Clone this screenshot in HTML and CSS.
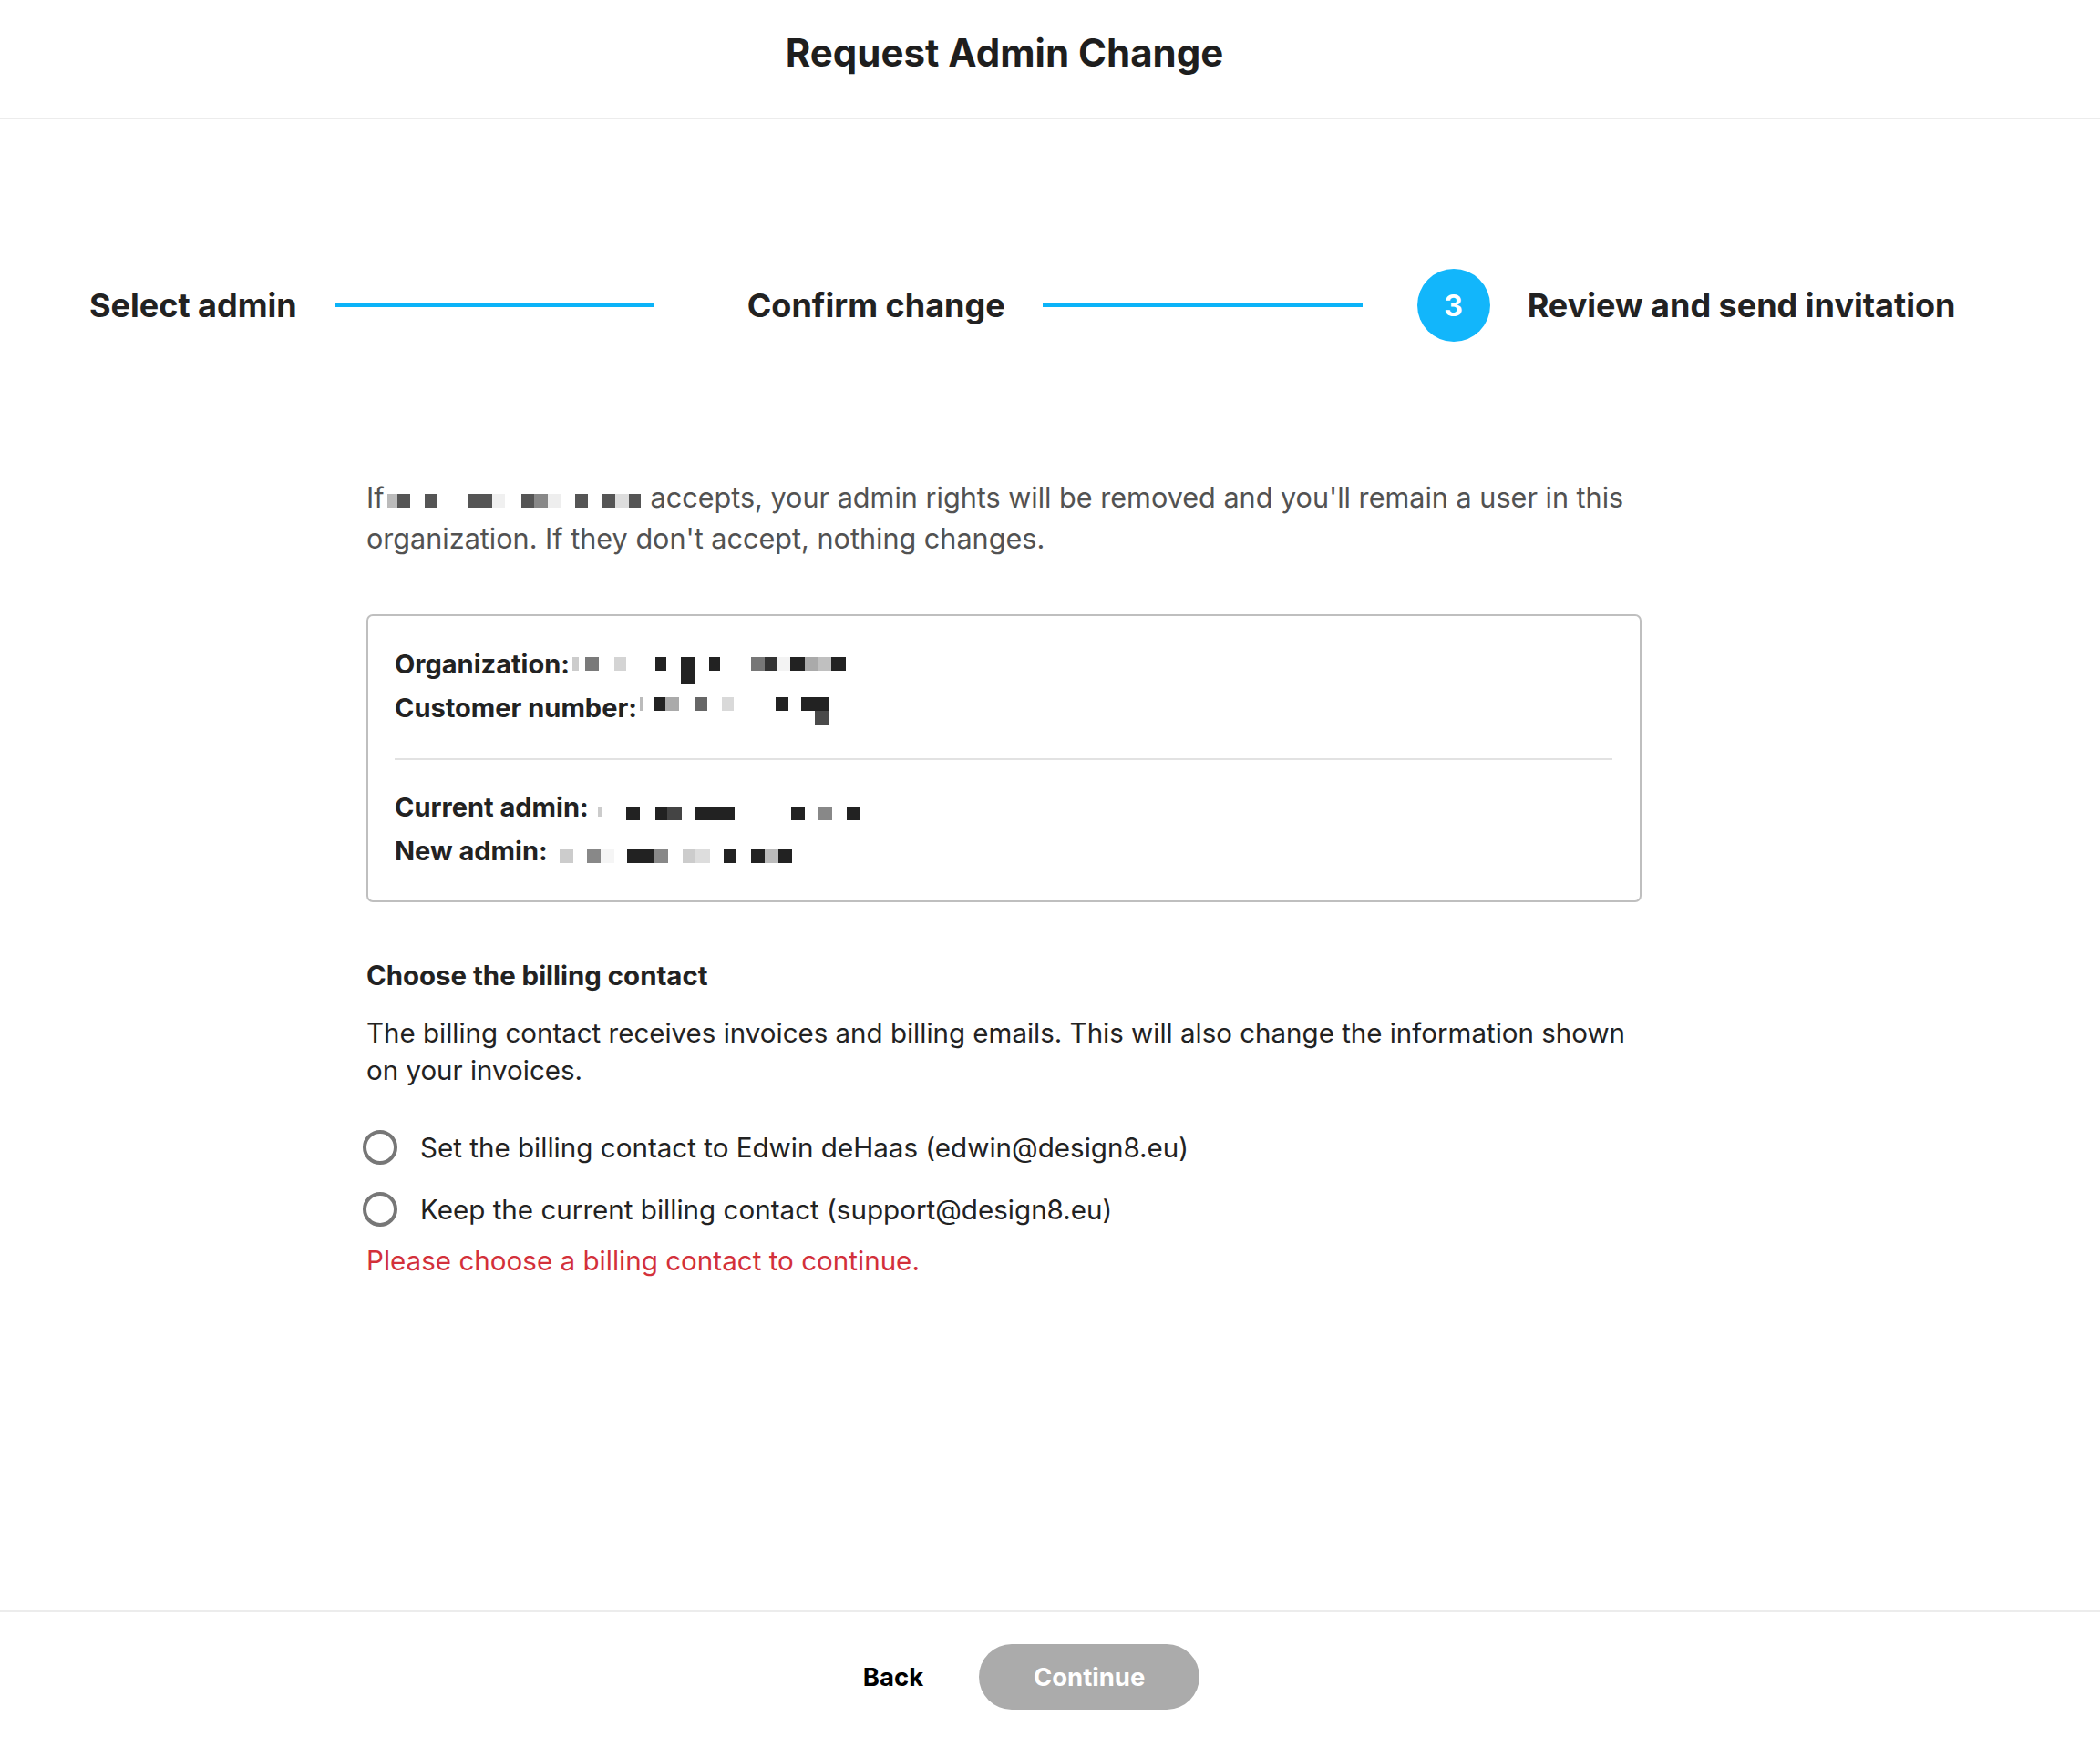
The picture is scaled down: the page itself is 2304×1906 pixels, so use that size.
FILE: index.html
```html
<!DOCTYPE html>
<html lang="en">
<head>
<meta charset="utf-8">
<title>Request Admin Change</title>
<link rel="stylesheet" href="styles.css">
</head>
<body>
<header class="topbar">
  <h1 class="title">Request Admin Change</h1>
</header>

<main class="main">
  <nav class="stepper">
    <span class="step-label">Select admin</span>
    <span class="step-line"></span>
    <span class="step-label step-label--gap">Confirm change</span>
    <span class="step-line"></span>
    <span class="step-circle">3</span>
    <span class="step-label">Review and send invitation</span>
  </nav>

  <section class="content">
    <p class="intro">If<svg class="redact redact--intro" width="284" height="15" viewBox="0 0 284 15" aria-hidden="true"><rect x="0" y="0" width="11" height="15" fill="#bbbbbb"/><rect x="11" y="0" width="14" height="15" fill="#555555"/><rect x="41" y="0" width="14" height="15" fill="#555555"/><rect x="88" y="0" width="27" height="15" fill="#555555"/><rect x="115" y="0" width="14" height="15" fill="#f0f0f0"/><rect x="147" y="0" width="14" height="15" fill="#555555"/><rect x="161" y="0" width="15" height="15" fill="#888888"/><rect x="176" y="0" width="15" height="15" fill="#eeeeee"/><rect x="206" y="0" width="14" height="15" fill="#555555"/><rect x="236" y="0" width="14" height="15" fill="#555555"/><rect x="250" y="0" width="15" height="15" fill="#dddddd"/><rect x="265" y="0" width="13" height="15" fill="#555555"/></svg>accepts, your admin rights will be removed and you'll remain a user in this organization. If they don't accept, nothing changes.</p>

    <div class="summary">
      <div class="summary-row"><span class="summary-key">Organization:</span><svg class="redact redact--org" width="305" height="30" viewBox="0 0 305 30" aria-hidden="true"><rect x="3" y="0" width="7" height="15" fill="#cccccc"/><rect x="17" y="0" width="15" height="15" fill="#7a7a7a"/><rect x="49" y="0" width="13" height="15" fill="#d4d4d4"/><rect x="94" y="0" width="12" height="15" fill="#222222"/><rect x="122" y="0" width="15" height="30" fill="#222222"/><rect x="153" y="0" width="12" height="15" fill="#222222"/><rect x="199" y="0" width="15" height="15" fill="#777777"/><rect x="214" y="0" width="14" height="15" fill="#333333"/><rect x="228" y="0" width="14" height="15" fill="#f3f3f3"/><rect x="242" y="0" width="16" height="15" fill="#222222"/><rect x="258" y="0" width="15" height="15" fill="#aaaaaa"/><rect x="273" y="0" width="14" height="15" fill="#c0c0c0"/><rect x="287" y="0" width="16" height="15" fill="#222222"/></svg></div>
      <div class="summary-row"><span class="summary-key">Customer number:</span><svg class="redact redact--cust" width="210" height="30" viewBox="0 0 210 30" aria-hidden="true"><rect x="3" y="0" width="4" height="15" fill="#bbbbbb"/><rect x="18" y="0" width="13" height="15" fill="#222222"/><rect x="31" y="0" width="15" height="15" fill="#aaaaaa"/><rect x="63" y="0" width="14" height="15" fill="#666666"/><rect x="93" y="0" width="13" height="15" fill="#d9d9d9"/><rect x="152" y="0" width="14" height="15" fill="#222222"/><rect x="180" y="0" width="30" height="15" fill="#222222"/><rect x="195" y="15" width="15" height="15" fill="#4a4a4a"/></svg></div>
      <hr class="summary-divider">
      <div class="summary-row"><span class="summary-key">Current admin:</span><svg class="redact redact--cur" width="300" height="15" viewBox="0 0 300 15" aria-hidden="true"><rect x="10" y="0" width="4" height="12" fill="#cccccc"/><rect x="41" y="0" width="15" height="15" fill="#222222"/><rect x="73" y="0" width="13" height="15" fill="#222222"/><rect x="86" y="0" width="16" height="15" fill="#444444"/><rect x="116" y="0" width="44" height="15" fill="#222222"/><rect x="222" y="0" width="15" height="15" fill="#222222"/><rect x="252" y="0" width="15" height="15" fill="#888888"/><rect x="283" y="0" width="14" height="15" fill="#222222"/></svg></div>
      <div class="summary-row"><span class="summary-key">New admin:</span><svg class="redact redact--new" width="270" height="15" viewBox="0 0 270 15" aria-hidden="true"><rect x="13" y="0" width="15" height="15" fill="#cccccc"/><rect x="43" y="0" width="15" height="15" fill="#888888"/><rect x="58" y="0" width="15" height="15" fill="#f5f5f5"/><rect x="87" y="0" width="30" height="15" fill="#222222"/><rect x="117" y="0" width="15" height="15" fill="#888888"/><rect x="148" y="0" width="14" height="15" fill="#cccccc"/><rect x="162" y="0" width="16" height="15" fill="#dddddd"/><rect x="193" y="0" width="14" height="15" fill="#222222"/><rect x="223" y="0" width="15" height="15" fill="#222222"/><rect x="238" y="0" width="15" height="15" fill="#bbbbbb"/><rect x="253" y="0" width="15" height="15" fill="#222222"/></svg></div>
    </div>

    <h2 class="billing-title">Choose the billing contact</h2>
    <p class="billing-desc">The billing contact receives invoices and billing emails. This will also change the information shown on your invoices.</p>

    <div class="radio-list">
      <label class="radio">
        <span class="radio-dot"></span>
        <span class="radio-text">Set the billing contact to Edwin deHaas (edwin@design8.eu)</span>
      </label>
      <label class="radio">
        <span class="radio-dot"></span>
        <span class="radio-text">Keep the current billing contact (support@design8.eu)</span>
      </label>
    </div>
    <p class="error">Please choose a billing contact to continue.</p>
  </section>
</main>

<footer class="footer">
  <button class="btn-back" type="button">Back</button>
  <button class="btn-continue" type="button" disabled>Continue</button>
</footer>
</body>
</html>
```
FILE: styles.css
```css
html, body {
  margin: 0;
  padding: 0;
  background: #ffffff;
}

body {
  font-family: "Inter", "Noto Sans", sans-serif;
  color: #222222;
  min-height: 100vh;
  display: flex;
  flex-direction: column;
}

/* Header */
.topbar {
  height: 115px;
  box-sizing: content-box;
  padding-right: 100px;
  padding-bottom: 14px;
  border-bottom: 2px solid #ececec;
  display: flex;
  align-items: center;
  justify-content: center;
}

.title {
  margin: 0;
  font-size: 42px;
  font-weight: 700;
  color: #1e1e1e;
  line-height: 1;
}

/* Main */
.main {
  flex: 1;
}

.stepper {
  display: flex;
  align-items: center;
  height: 80px;
  margin-top: 164px;
  margin-left: 98px;
}

.step-label {
  font-size: 36px;
  font-weight: 700;
  color: #222222;
  white-space: nowrap;
}

.step-label--gap {
  margin-left: 102px;
}

.step-line {
  width: 351px;
  height: 4px;
  background: #0bb3f8;
  margin-left: 41px;
}

.step-circle {
  width: 80px;
  height: 80px;
  border-radius: 50%;
  background: #12b6fb;
  color: #ffffff;
  font-size: 32px;
  font-weight: 700;
  display: flex;
  align-items: center;
  justify-content: center;
  margin-left: 60px;
  margin-right: 41px;
}

.content {
  margin-left: 402px;
  width: 1399px;
}

.intro {
  margin: 148px 0 0;
  font-size: 30.6px;
  line-height: 45px;
  color: #525252;
}

.redact {
  display: inline-block;
}

.redact--intro {
  vertical-align: baseline;
  margin-left: 3px;
  margin-right: 5px;
}

/* Summary card */
.summary {
  margin-top: 61px;
  border: 2px solid #bfbfbf;
  border-radius: 7px;
  padding: 29px 30px 30px 29px;
}

.summary-row {
  font-size: 29px;
  line-height: 48px;
  height: 48px;
  white-space: nowrap;
}

.summary-key {
  font-weight: 700;
  color: #222222;
}

.redact--org {
  vertical-align: -12px;
}

.redact--cust {
  vertical-align: -8px;
}

.redact--cur {
  vertical-align: -4px;
}

.redact--new {
  vertical-align: -3px;
}

.summary-divider {
  border: 0;
  height: 2px;
  background: #e2e2e2;
  margin: 31px 0 28px;
}

/* Billing */
.billing-title {
  margin: 61px 0 0;
  font-size: 29.4px;
  line-height: 40px;
  font-weight: 700;
  color: #222222;
}

.billing-desc {
  margin: 22px 0 0;
  font-size: 29.5px;
  line-height: 41px;
  color: #222222;
}

.radio-list {
  margin-top: 44px;
  display: flex;
  flex-direction: column;
  gap: 28px;
}

.radio {
  display: flex;
  align-items: center;
  height: 40px;
  margin-left: -4px;
  cursor: pointer;
}

.radio-dot {
  width: 30px;
  height: 30px;
  border: 4px solid #777777;
  border-radius: 50%;
  flex: none;
}

.radio-text {
  margin-left: 25px;
  font-size: 29.6px;
  color: #222222;
  white-space: nowrap;
}

.error {
  margin: 16px 0 0;
  font-size: 29.6px;
  line-height: 40px;
  color: #d3303a;
}

/* Footer */
.footer {
  border-top: 2px solid #ececec;
  height: 139px;
  box-sizing: border-box;
  padding-top: 4px;
  padding-right: 41px;
  display: flex;
  align-items: center;
  justify-content: center;
  gap: 61px;
}

.btn-back {
  border: 0;
  background: transparent;
  padding: 0;
  font-family: inherit;
  font-size: 27.5px;
  font-weight: 700;
  color: #000000;
}

.btn-continue {
  border: 0;
  width: 242px;
  height: 72px;
  border-radius: 36px;
  background: #ababab;
  color: #ffffff;
  font-family: inherit;
  font-size: 27.5px;
  font-weight: 700;
  padding: 0;
}
```
